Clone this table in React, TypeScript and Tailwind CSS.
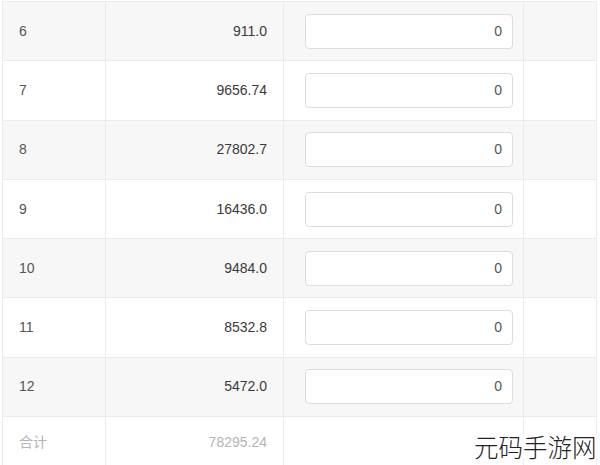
import React from 'react';

const rows = [
  { month: '6', amount: '911.0' },
  { month: '7', amount: '9656.74' },
  { month: '8', amount: '27802.7' },
  { month: '9', amount: '16436.0' },
  { month: '10', amount: '9484.0' },
  { month: '11', amount: '8532.8' },
  { month: '12', amount: '5472.0' },
];

export default function App() {
  return (
    <div
      className="relative h-[465px] w-[600px] overflow-hidden bg-white text-[14px]"
      style={{ fontFamily: '"Liberation Sans", "Noto Sans CJK SC", sans-serif' }}
    >
      <div className="ml-[2px] mt-[1px] w-[595px] border-l border-r border-t border-[#ebebeb]">
        {rows.map((r, i) => (
          <div
            key={r.month}
            className={`flex h-[59.3px] border-b border-[#ebebeb] ${i % 2 === 0 ? 'bg-[#f7f7f7]' : 'bg-white'}`}
          >
            <div className="flex w-[103px] items-center border-r border-[#ebebeb] pl-[16px] text-[#555]">
              {r.month}
            </div>
            <div className="flex w-[178px] items-center justify-end border-r border-[#ebebeb] pr-[16px] text-[#3a3a3a]">
              {r.amount}
            </div>
            <div className="flex w-[240px] items-center border-r border-[#ebebeb] pl-[21px]">
              <div className="flex h-[35px] w-[208px] items-center justify-end rounded-[4px] border border-[#dcdcdc] bg-white pr-[10px] text-[#555]">
                0
              </div>
            </div>
            <div className="flex-1" />
          </div>
        ))}
        <div className="flex h-[50px] bg-white text-[#b4b4b4]">
          <div className="flex w-[103px] items-center border-r border-[#ebebeb] pl-[16px]">合计</div>
          <div className="flex w-[178px] items-center justify-end border-r border-[#ebebeb] pr-[16px]">
            78295.24
          </div>
          <div className="w-[240px] border-r border-[#ebebeb]" />
          <div className="flex-1" />
        </div>
      </div>
      <div
        className="absolute bottom-[6px] left-[474px] whitespace-nowrap bg-white/70 text-[24.5px] font-light leading-none text-[#222]"
        style={{ fontFamily: '"Noto Sans CJK SC", sans-serif' }}
      >
        元码手游网
      </div>
    </div>
  );
}
